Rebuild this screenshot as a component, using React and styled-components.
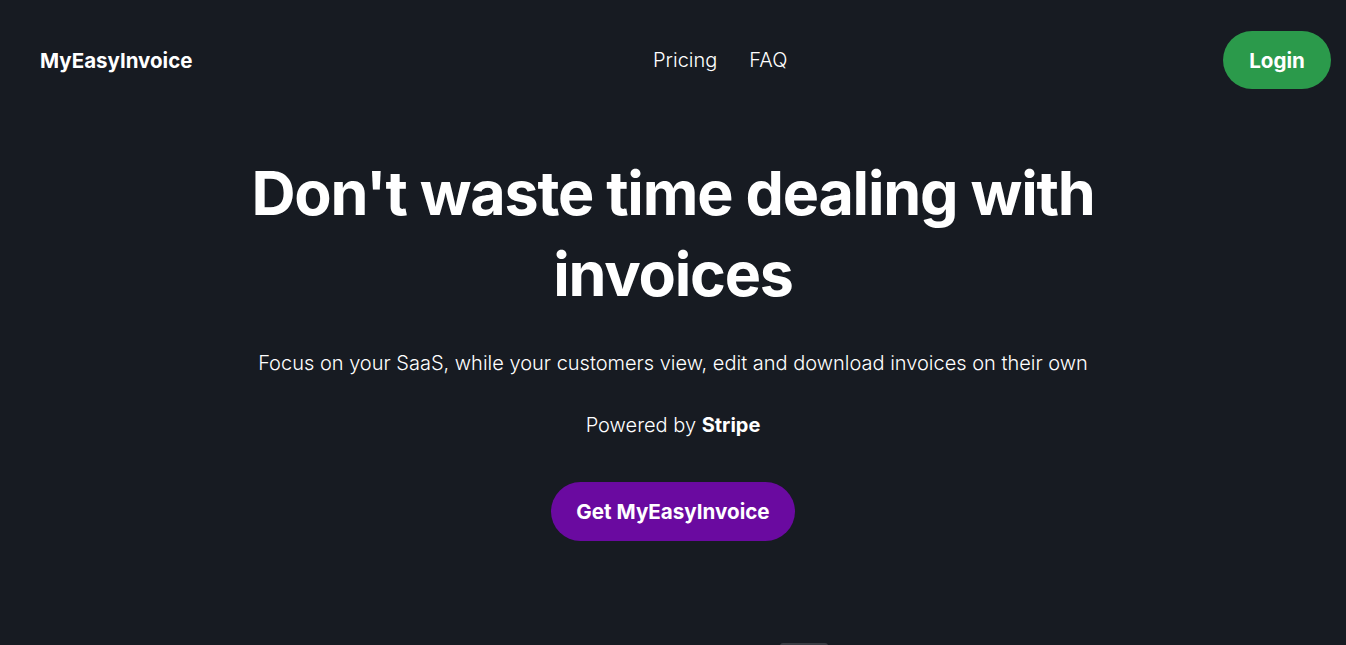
import React from "react";
import styled, { createGlobalStyle } from "styled-components";

const GlobalStyle = createGlobalStyle`
  html, body {
    margin: 0;
    padding: 0;
    background: #171b22;
  }
  body {
    font-family: Inter, "Noto Sans", sans-serif;
    color: #ffffff;
    overflow: hidden;
  }
`;

const Page = styled.div`
  min-height: 645px;
  background: #171b22;
`;

const Header = styled.header`
  display: flex;
  justify-content: space-between;
  align-items: center;
  padding: 31px 15px 0 40px;
`;

const Logo = styled.a`
  font-size: 20.5px;
  font-weight: 700;
  color: #fff;
  text-decoration: none;
`;

const Nav = styled.nav`
  display: flex;
  gap: 32px;
  margin-left: 25px;
`;

const NavLink = styled.a`
  font-size: 20px;
  font-weight: 300;
  color: #fff;
  text-decoration: none;
`;

const Pill = styled.button`
  border: none;
  border-radius: 999px;
  color: #fff;
  font-family: inherit;
  font-size: 20.6px;
  font-weight: 700;
  cursor: pointer;
  background: ${(p) => p.$bg};
  width: ${(p) => p.$w}px;
  height: ${(p) => p.$h}px;
  padding: 0;
`;

const Hero = styled.main`
  display: flex;
  flex-direction: column;
  align-items: center;
  text-align: center;
  padding-top: 64px;
`;

const Title = styled.h1`
  margin: 0;
  font-size: 61px;
  line-height: 81px;
  font-weight: 700;
  letter-spacing: -0.02em;
  max-width: 900px;
`;

const Sub = styled.p`
  margin: ${(p) => p.$mt}px 0 0;
  font-size: 20px;
  line-height: 28px;
  font-weight: 300;

  strong {
    font-weight: 700;
  }
`;

const Cta = styled.div`
  margin-top: 43px;
`;

const Peek = styled.div`
  margin-top: 102px;
  width: 48px;
  height: 10px;
  border-radius: 3px 3px 0 0;
  background: #3a3d44;
  transform: translateX(131px);
`;

export default function App() {
  return (
    <Page>
      <GlobalStyle />
      <Header>
        <Logo href="#">MyEasyInvoice</Logo>
        <Nav>
          <NavLink href="#">Pricing</NavLink>
          <NavLink href="#">FAQ</NavLink>
        </Nav>
        <Pill $bg="#2b9a4b" $w={108} $h={58}>Login</Pill>
      </Header>
      <Hero>
        <Title>Don't waste time dealing with invoices</Title>
        <Sub $mt={34}>
          Focus on your SaaS, while your customers view, edit and download invoices on their own
        </Sub>
        <Sub $mt={34}>
          Powered by <strong>Stripe</strong>
        </Sub>
        <Cta>
          <Pill $bg="#6a0aa0" $w={244} $h={59}>Get MyEasyInvoice</Pill>
        </Cta>
        <Peek />
      </Hero>
    </Page>
  );
}
